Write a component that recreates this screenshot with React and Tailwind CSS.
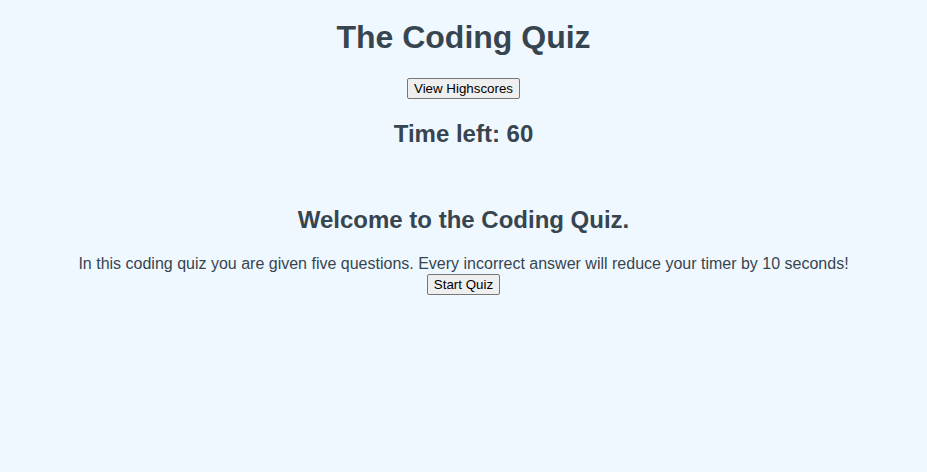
import React from 'react';

const App = () => {
  return (
    <div className="min-h-[472px] bg-[#f0f8ff] text-[#36454f] text-center font-['Liberation_Sans',Arial,sans-serif]">
      <header className="pt-[19px]">
        <h1 className="text-[32px] font-bold leading-[37px] mb-[20px]">The Coding Quiz</h1>
        <button className="bg-[#efefef] text-black border border-[#767676] rounded-[2px] px-[6px] py-[1px] text-[13.33px] leading-[17px] hover:bg-[#e5e5e5]">
          View Highscores
        </button>
        <h2 className="text-[24px] font-bold leading-[28px] mt-[20px]">Time left: 60</h2>
      </header>

      <main className="mt-[58px]">
        <h2 className="text-[24px] font-bold leading-[28px] mb-[21px]">Welcome to the Coding Quiz.</h2>
        <div className="text-[16px] leading-[18px]">
          <p>In this coding quiz you are given five questions. Every incorrect answer will reduce your timer by 10 seconds!</p>
          <button className="mt-[1px] bg-[#efefef] text-black border border-[#767676] rounded-[2px] px-[6px] py-[1px] text-[13.33px] leading-[17px] hover:bg-[#e5e5e5]">
            Start Quiz
          </button>
        </div>
      </main>
    </div>
  );
};

export default App;
